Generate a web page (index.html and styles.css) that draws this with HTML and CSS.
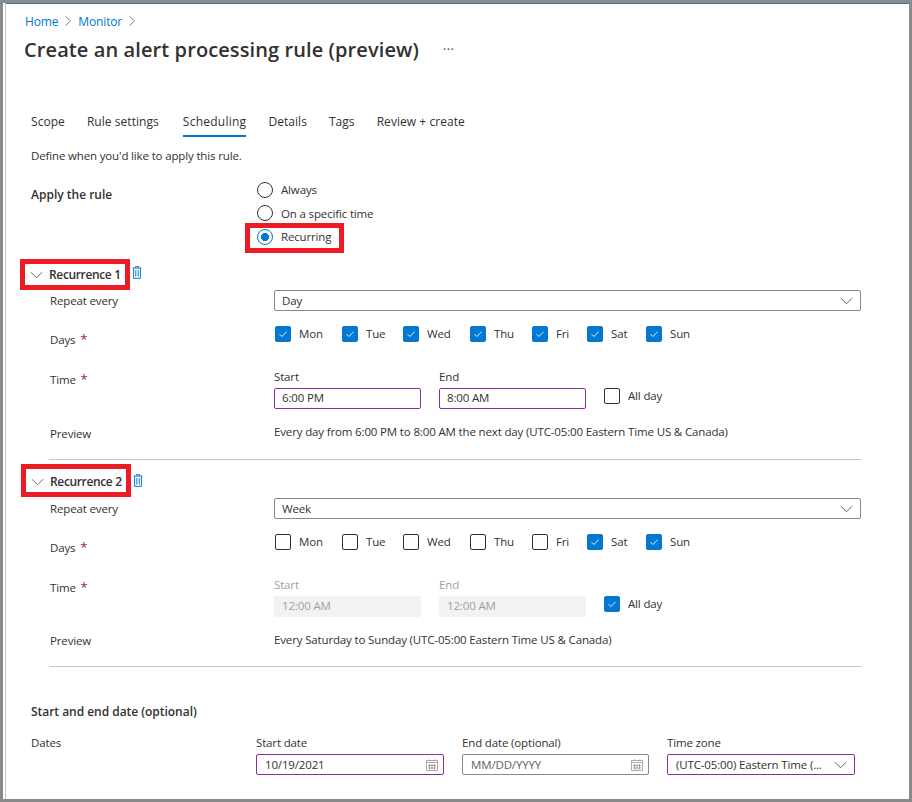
FILE: index.html
```html
<!DOCTYPE html>
<html lang="en">
<head>
<meta charset="utf-8">
<title>Create an alert processing rule (preview)</title>
<link rel="stylesheet" href="styles.css">
</head>
<body>
<main class="frame">
  <nav class="crumbs">
    <a>Home</a>
    <svg class="crumb-sep" viewBox="0 0 8 12"><path d="M1.5 1.5 6.5 6l-5 4.5"/></svg>
    <a>Monitor</a>
    <svg class="crumb-sep" viewBox="0 0 8 12"><path d="M1.5 1.5 6.5 6l-5 4.5"/></svg>
  </nav>
  <header class="title-row">
    <h1>Create an alert processing rule (preview)</h1>
    <span class="more">···</span>
  </header>
  <div class="tabs">
    <span class="tab">Scope</span>
    <span class="tab">Rule settings</span>
    <span class="tab active">Scheduling</span>
    <span class="tab">Details</span>
    <span class="tab">Tags</span>
    <span class="tab">Review + create</span>
  </div>
  <p class="intro">Define when you'd like to apply this rule.</p>

  <section class="apply">
    <h2 class="apply-label">Apply the rule</h2>
    <div class="radios">
      <div class="radio"><i class="dot"></i><span>Always</span></div>
      <div class="radio"><i class="dot"></i><span>On a specific time</span></div>
      <div class="radio selected"><i class="dot on"></i><span>Recurring</span></div>
    </div>
  </section>

  <section class="rec">
    <div class="rec-head">
      <div class="rec-title">
        <svg class="chev" viewBox="0 0 14 8"><path d="M1 1l6 6 6-6"/></svg>
        <span>Recurrence 1</span>
      </div>
      <svg class="trash" viewBox="0 0 12 16"><path d="M.5 2.5h11M4 2.5V.8h4v1.7M1.8 2.5v12.7h8.4V2.5M4.5 5v8M7.5 5v8"/></svg>
    </div>
    <div class="row r-repeat">
      <span class="lbl">Repeat every</span>
      <div class="select"><span>Day</span><svg class="chev" viewBox="0 0 14 8"><path d="M1 1l6 6 6-6"/></svg></div>
    </div>
    <div class="row r-days">
      <span class="lbl">Days <b>*</b></span>
      <div class="days">
        <label class="day w-mon"><i class="cb on"><svg viewBox="0 0 16 16"><path d="M4 8.2l2.7 2.7L12 5.5"/></svg></i><span>Mon</span></label>
        <label class="day w-tue"><i class="cb on"><svg viewBox="0 0 16 16"><path d="M4 8.2l2.7 2.7L12 5.5"/></svg></i><span>Tue</span></label>
        <label class="day w-wed"><i class="cb on"><svg viewBox="0 0 16 16"><path d="M4 8.2l2.7 2.7L12 5.5"/></svg></i><span>Wed</span></label>
        <label class="day w-thu"><i class="cb on"><svg viewBox="0 0 16 16"><path d="M4 8.2l2.7 2.7L12 5.5"/></svg></i><span>Thu</span></label>
        <label class="day w-fri"><i class="cb on"><svg viewBox="0 0 16 16"><path d="M4 8.2l2.7 2.7L12 5.5"/></svg></i><span>Fri</span></label>
        <label class="day w-sat"><i class="cb on"><svg viewBox="0 0 16 16"><path d="M4 8.2l2.7 2.7L12 5.5"/></svg></i><span>Sat</span></label>
        <label class="day"><i class="cb on"><svg viewBox="0 0 16 16"><path d="M4 8.2l2.7 2.7L12 5.5"/></svg></i><span>Sun</span></label>
      </div>
    </div>
    <div class="row r-time">
      <span class="lbl lbl-time">Time <b>*</b></span>
      <div class="times">
        <div class="time"><span class="cap">Start</span><div class="input edited">6:00 PM</div></div>
        <div class="time"><span class="cap">End</span><div class="input edited">8:00 AM</div></div>
        <label class="day allday"><i class="cb"></i><span>All day</span></label>
      </div>
    </div>
    <div class="row r-preview">
      <span class="lbl">Preview</span>
      <span class="val">Every day from 6:00 PM to 8:00 AM the next day (UTC-05:00 Eastern Time US &amp; Canada)</span>
    </div>
    <hr class="rule">
  </section>

  <section class="rec rec-2">
    <div class="rec-head">
      <div class="rec-title">
        <svg class="chev" viewBox="0 0 14 8"><path d="M1 1l6 6 6-6"/></svg>
        <span>Recurrence 2</span>
      </div>
      <svg class="trash" viewBox="0 0 12 16"><path d="M.5 2.5h11M4 2.5V.8h4v1.7M1.8 2.5v12.7h8.4V2.5M4.5 5v8M7.5 5v8"/></svg>
    </div>
    <div class="row r-repeat">
      <span class="lbl">Repeat every</span>
      <div class="select"><span>Week</span><svg class="chev" viewBox="0 0 14 8"><path d="M1 1l6 6 6-6"/></svg></div>
    </div>
    <div class="row r-days">
      <span class="lbl">Days <b>*</b></span>
      <div class="days">
        <label class="day w-mon"><i class="cb"></i><span>Mon</span></label>
        <label class="day w-tue"><i class="cb"></i><span>Tue</span></label>
        <label class="day w-wed"><i class="cb"></i><span>Wed</span></label>
        <label class="day w-thu"><i class="cb"></i><span>Thu</span></label>
        <label class="day w-fri"><i class="cb"></i><span>Fri</span></label>
        <label class="day w-sat"><i class="cb on"><svg viewBox="0 0 16 16"><path d="M4 8.2l2.7 2.7L12 5.5"/></svg></i><span>Sat</span></label>
        <label class="day"><i class="cb on"><svg viewBox="0 0 16 16"><path d="M4 8.2l2.7 2.7L12 5.5"/></svg></i><span>Sun</span></label>
      </div>
    </div>
    <div class="row r-time">
      <span class="lbl lbl-time">Time <b>*</b></span>
      <div class="times">
        <div class="time off"><span class="cap">Start</span><div class="input disabled">12:00 AM</div></div>
        <div class="time off"><span class="cap">End</span><div class="input disabled">12:00 AM</div></div>
        <label class="day allday"><i class="cb on"><svg viewBox="0 0 16 16"><path d="M4 8.2l2.7 2.7L12 5.5"/></svg></i><span>All day</span></label>
      </div>
    </div>
    <div class="row r-preview">
      <span class="lbl">Preview</span>
      <span class="val">Every Saturday to Sunday (UTC-05:00 Eastern Time US &amp; Canada)</span>
    </div>
    <hr class="rule">
  </section>

  <h2 class="dates-title">Start and end date (optional)</h2>
  <section class="dates">
    <span class="dates-lbl">Dates</span>
    <div class="field f-start">
      <span class="cap">Start date</span>
      <div class="input edited has-icon"><span>10/19/2021</span>
        <svg class="cal" viewBox="0 0 12 12"><path d="M.5 1.5h11v10H.5zM.5 3.5h11M3 .3v1.2M9 .3v1.2M3.5 5v5.5M6 5v5.5M8.5 5v5.5M2 6.5h8M2 9h8"/></svg>
      </div>
    </div>
    <div class="field f-end">
      <span class="cap">End date (optional)</span>
      <div class="input has-icon placeholder"><span>MM/DD/YYYY</span>
        <svg class="cal" viewBox="0 0 12 12"><path d="M.5 1.5h11v10H.5zM.5 3.5h11M3 .3v1.2M9 .3v1.2M3.5 5v5.5M6 5v5.5M8.5 5v5.5M2 6.5h8M2 9h8"/></svg>
      </div>
    </div>
    <div class="field f-zone">
      <span class="cap">Time zone</span>
      <div class="input edited has-icon"><span>(UTC-05:00) Eastern Time (...</span>
        <svg class="chev" viewBox="0 0 14 8"><path d="M1 1l6 6 6-6"/></svg>
      </div>
    </div>
  </section>
</main>
</body>
</html>
```
FILE: styles.css
```css
*, *::after { box-sizing: border-box; }
html, body { margin: 0; padding: 0; }
body {
  width: 912px; height: 802px; overflow: hidden;
  background: #8a8a8a;
  padding: 3px 3px 3px 6px;
  font-family: "Open Sans", "Noto Sans", sans-serif;
  font-size: 11.5px;
  letter-spacing: -0.15px;
  color: #323130;
}
.frame {
  width: 903px; height: 796px; background: #fff;
  border-top: 1px solid #2b7cb8;
  box-shadow: -1px 0 0 #c4c4c4, -3px 0 0 #fff;
}
.crumbs { display: flex; align-items: center; height: 14px; margin: 10px 0 0 19px; color: #0078d4; font-size: 12px; }
.crumb-sep { width: 8px; height: 12px; margin: 0 6px; fill: none; stroke: #8a8886; stroke-width: 1; }
.title-row { display: flex; align-items: center; height: 28px; margin: 7px 0 0 18px; }
h1 { margin: 0; font-size: 20px; font-weight: 600; letter-spacing: 0.1px; color: #323130; }
.more { margin-left: 24px; font-size: 12px; letter-spacing: 0.7px; color: #323130; }
.tabs { display: flex; margin: 49px 0 0 25px; height: 25px; gap: 22px; font-size: 12px; letter-spacing: 0.05px; }
.tab { display: block; height: 25px; line-height: 20px; color: #323130; }
.tab.active { border-bottom: 2px solid #0078d4; margin-left: 2px; letter-spacing: 0.25px; }
.intro { margin: 11px 0 0 25px; height: 16px; line-height: 16px; font-size: 11.5px; }
.apply { display: flex; height: 84px; margin: 14px 0 0 25px; }
.apply-label { margin: 9px 0 0; width: 226px; font-size: 12px; font-weight: 600; line-height: 16px; letter-spacing: 0; }
.radios { display: flex; flex-direction: column; }
.radio { display: flex; align-items: center; height: 23.5px; gap: 8px; font-size: 11.5px; position: relative; }
.dot { width: 16px; height: 16px; border: 1px solid #323130; border-radius: 50%; display: block; }
.dot.on { border-color: #0078d4; background: radial-gradient(circle, #0078d4 0 3.8px, #fff 4.3px); }
.radio.selected::after { content: ""; position: absolute; left: -12px; top: -2px; width: 99px; height: 30px; border: 5px solid #ed1c24; }
.rec-head { display: flex; align-items: flex-start; height: 28px; margin-left: 14px; }
.rec-title { display: flex; align-items: center; gap: 6px; width: 110px; height: 31px; border: 5px solid #ed1c24; padding-left: 5px; margin-right: 2px; font-size: 12px; font-weight: 600; letter-spacing: -0.35px; white-space: nowrap; position: relative; top: -3px; }
.chev { width: 13px; height: 8px; fill: none; stroke: #605e5c; stroke-width: 1; flex: none; }
.trash { width: 10px; height: 13px; fill: none; stroke: #0078d4; stroke-width: 1.2; margin-top: 4px; }
.row { display: flex; margin-left: 44px; }
.lbl { width: 224px; flex: none; font-size: 11.5px; line-height: 16px; }
.lbl b { color: #a4262c; font-weight: 400; font-size: 13px; margin-left: 2px; }
.r-repeat { height: 36px; align-items: flex-start; }
.r-repeat .lbl { padding-top: 3px; }
.select { width: 587px; height: 21px; border: 1px solid #8a8886; border-radius: 2px; display: flex; align-items: center; justify-content: space-between; padding: 0 7px; }
.r-days { height: 43px; }
.r-days .lbl { padding-top: 5px; }
.days { display: flex; padding-left: 1px; }
.day { display: flex; align-items: center; gap: 8px; height: 16px; white-space: nowrap; font-size: 11.5px; }
.day span { line-height: 16px; margin-top: -1px; }
.allday span { margin-top: 0; }
.cb { width: 16px; height: 16px; border: 1px solid #323130; border-radius: 2px; display: block; flex: none; background: #fff; }
.cb.on { background: #0078d4; border-color: #0078d4; }
.cb svg { display: block; width: 14px; height: 14px; fill: none; stroke: #fff; stroke-width: 1; }
.w-mon { width: 67px; } .w-tue { width: 61px; } .w-wed { width: 67px; }
.w-thu { width: 62px; } .w-fri { width: 55px; } .w-sat { width: 59px; }
.r-time { height: 55px; }
.lbl-time { padding-top: 2px; }
.times { display: flex; align-items: flex-start; }
.time { width: 147px; margin-right: 18px; }
.cap { display: block; height: 16px; line-height: 16px; font-size: 11.5px; margin-bottom: 3px; }
.input { height: 21px; border: 1px solid #8a8886; border-radius: 2px; padding: 0 7px; line-height: 18px; font-size: 11.5px; }
.input.edited { border-color: #8a2da5; }
.input.disabled { background: #f3f2f1; border-color: #f3f2f1; color: #a19f9d; }
.time.off .cap { color: #a19f9d; }
.allday { margin-top: 19px; }
.r-preview { height: 35px; }
.r-preview .lbl { padding-top: 2px; }
.val { white-space: nowrap; }
.rule { margin: 0 48px 0 43px; border: 0; border-top: 1px solid #c8c6c4; height: 1px; }
.rec-2 { margin-top: 10px; }
.rec-2 .rec-title { top: -6px; height: 33px; margin-left: 1px; padding-top: 2px; }
.rec-2 .r-time { height: 54px; }
.rec-2 .val { padding-top: 1px; }
.dates-title { margin: 37px 0 0 25px; font-size: 12px; font-weight: 600; line-height: 16px; height: 16px; letter-spacing: -0.03px; }
.dates { display: flex; margin: 15px 0 0 25px; }
.dates-lbl { width: 225px; line-height: 16px; }
.field { flex: none; }
.f-start { width: 188px; margin-right: 18px; }
.f-end { width: 187px; margin-right: 18px; }
.f-zone { width: 188px; }
.has-icon { display: flex; align-items: center; justify-content: space-between; padding: 0 5px 0 8px; }
.f-zone .chev { margin-right: 2px; }
.placeholder { color: #605e5c; }
.cal { width: 12px; height: 12px; fill: none; stroke: #8a8886; stroke-width: .7; }
```
